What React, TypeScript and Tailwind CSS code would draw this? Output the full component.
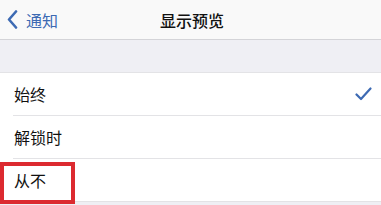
import React from "react";

export default function App() {
  const font = { fontFamily: '"Noto Sans CJK SC", "Noto Sans", sans-serif' };
  return (
    <div className="w-[381px] h-[205px] overflow-hidden bg-[#efeff4] relative" style={font}>
      <div className="h-[40px] bg-[#f9f9f9] border-b border-[#d4d4d8] flex items-center relative">
        <div className="flex items-center pl-[7px] text-[#3d6ab3]">
          <svg width="11" height="19" viewBox="0 0 11 19" fill="none">
            <path d="M9 1.5 L2 9.5 L9 17.5" stroke="#3d6ab3" strokeWidth="2.6" strokeLinecap="round" strokeLinejoin="round" />
          </svg>
          <span className="ml-[8px] text-[16px] leading-none">通知</span>
        </div>
        <div className="absolute left-0 right-0 top-0 h-[39px] flex items-center justify-center pointer-events-none">
          <span className="text-[16px] font-medium text-[#111] leading-none pl-[3px]">显示预览</span>
        </div>
      </div>
      <div className="h-[32px]" />
      <div className="bg-white border-t border-[#e3e3e6] border-b">
        <div className="h-[42px] flex items-center pl-[14px] pr-[9px] relative">
          <span className="text-[16px] text-[#111] leading-none">始终</span>
          <svg className="ml-auto" width="17" height="14" viewBox="0 0 17 14" fill="none">
            <path d="M1.5 7.5 L6 12 L15.5 1.5" stroke="#3d6ab3" strokeWidth="2.2" strokeLinecap="round" strokeLinejoin="round" />
          </svg>
        </div>
        <div className="ml-[13px] h-px bg-[#e3e3e6]" />
        <div className="h-[42px] flex items-center pl-[14px]">
          <span className="text-[16px] text-[#111] leading-none">解锁时</span>
        </div>
        <div className="ml-[13px] h-px bg-[#e3e3e6]" />
        <div className="h-[42px] flex items-center pl-[14px] relative">
          <span className="text-[16px] text-[#111] leading-none">从不</span>
          <div className="absolute left-0 top-[3px] w-[75px] h-[42px] border-[4px] border-[#dc2a30]" />
        </div>
      </div>
    </div>
  );
}
